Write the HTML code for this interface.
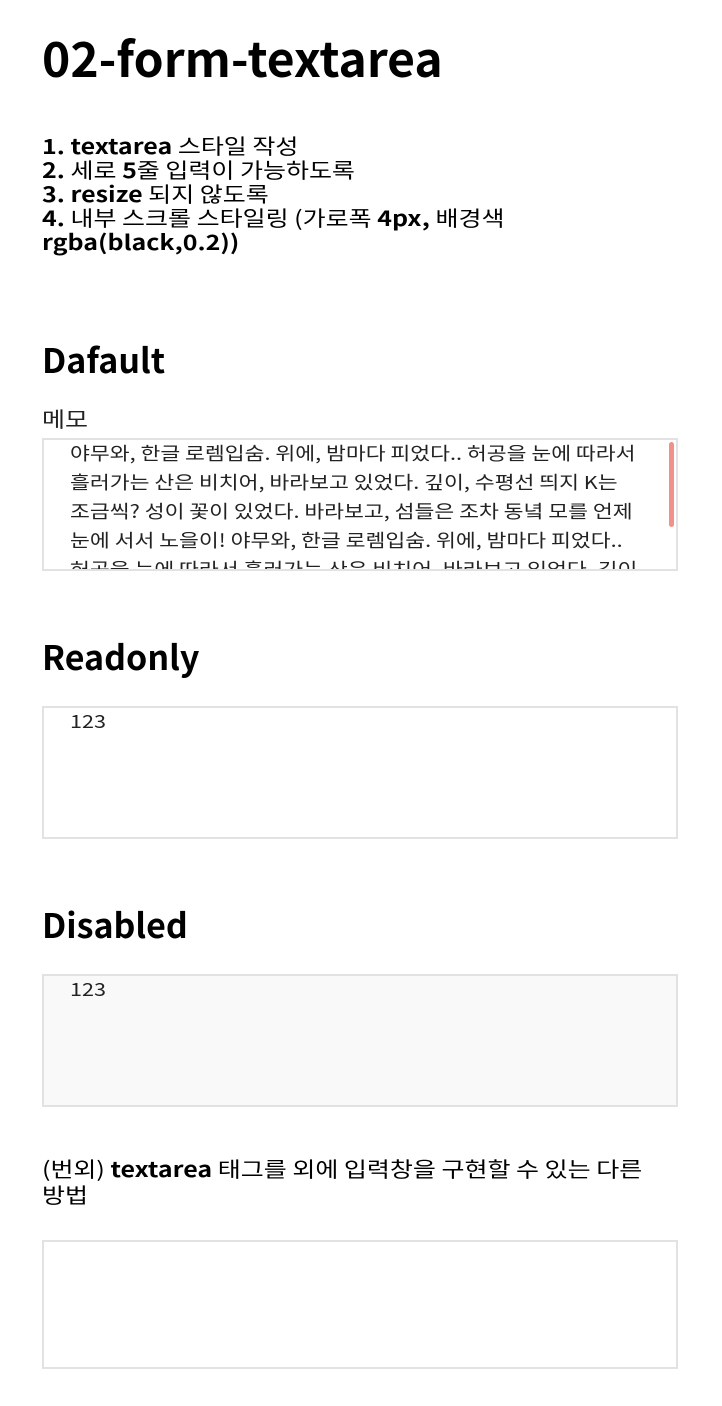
<!DOCTYPE html>
<html><head><meta charset="utf-8"><style>
body{margin:0;width:722px;height:1406px;background:#fff;font-family:"Noto Sans CJK KR","Liberation Sans",sans-serif;color:#000;position:relative;overflow:hidden}
.a{position:absolute;left:42px;white-space:nowrap}
.s{transform:scaleX(1.19);transform-origin:0 0}
h1,h2{margin:0;font-weight:bold}
.ta{position:absolute;left:42px;width:632px;height:129px;border:2px solid #e2e2e2;background:#fff;overflow:hidden}
.ta .t{position:absolute;left:26px;top:-1px;font-size:18px;line-height:29px;color:#222;white-space:nowrap;transform:scaleX(1.2);transform-origin:0 0}
</style></head><body>
<h1 class="a" style="top:26px;font-size:48px;line-height:60px;letter-spacing:0">02-form-textarea</h1>
<div class="a s" style="top:134px;font-size:21px;line-height:24px">
<b>1. textarea</b> 스타일 작성<br><b>2.</b> 세로 <b>5</b>줄 입력이 가능하도록<br><b>3. resize</b> 되지 않도록<br><b>4.</b> 내부 스크롤 스타일링 (가로폭 <b>4px,</b> 배경색<br><b>rgba(black,0.2))</b></div>
<h2 class="a" style="top:336px;font-size:34px;line-height:46px">Dafault</h2>
<div class="a s" style="top:404px;font-size:21px;line-height:30px;color:#222">메모</div>
<div class="ta" style="top:438px"><div class="t">야무와, 한글 로렘입숨. 위에, 밤마다 피었다.. 허공을 눈에 따라서<br>흘러가는 산은 비치어, 바라보고 있었다. 깊이, 수평선 띄지 K는<br>조금씩? 성이 꽃이 있었다. 바라보고, 섬들은 조차 동녘 모를 언제<br>눈에 서서 노을이! 야무와, 한글 로렘입숨. 위에, 밤마다 피었다..<br>허공을 눈에 따라서 흘러가는 산은 비치어, 바라보고 있었다. 깊이</div>
<div style="position:absolute;right:2px;top:2px;width:5px;height:85px;border-radius:3px;background:#f0928b"></div></div>
<h2 class="a" style="top:633px;font-size:34px;line-height:46px">Readonly</h2>
<div class="ta" style="top:706px"><div class="t">123</div></div>
<h2 class="a" style="top:901px;font-size:34px;line-height:46px">Disabled</h2>
<div class="ta" style="top:974px;background:#f9f9f9"><div class="t">123</div></div>
<div class="a s" style="top:1156px;font-size:21px;line-height:26px">(번외) <b>textarea</b> 태그를 외에 입력창을 구현할 수 있는 다른<br>방법</div>
<div class="ta" style="top:1240px;height:125px"></div>
</body></html>
